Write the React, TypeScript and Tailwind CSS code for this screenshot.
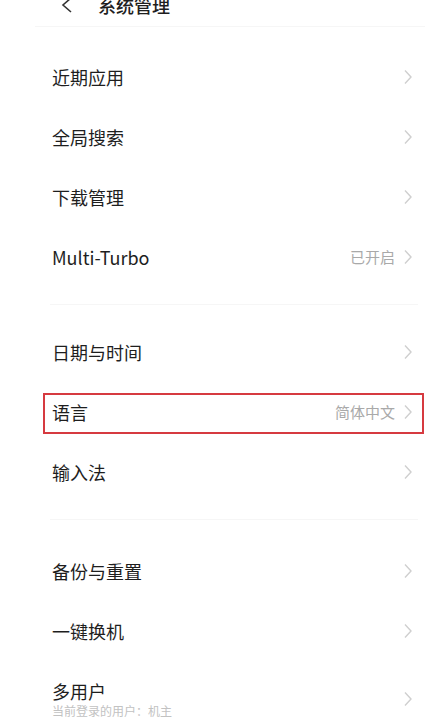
import React from "react";

const Chevron = () => (
  <svg width="10" height="16" viewBox="0 0 10 16" className="shrink-0">
    <polyline points="2,1.5 8,8 2,14.5" fill="none" stroke="#cfcfcf" strokeWidth="1.4" />
  </svg>
);

type RowProps = { title: string; value?: string; sub?: string; highlight?: boolean };

const Row = ({ title, value, sub, highlight }: RowProps) => (
  <div className="relative flex items-center pl-[52px] pr-[12px] h-[60px]">
    <div className="flex-1 flex flex-col">
      <span className="text-[18px] leading-[22px] text-[#1e1e1e]">{title}</span>
      {sub && <span className="text-[12px] leading-[16px] mt-[1px] text-[#c2c2c2]">{sub}</span>}
    </div>
    {value && <span className="text-[15px] text-[#a9a9a9] mr-[8px]">{value}</span>}
    <Chevron />
    {highlight && (
      <div className="absolute left-[43px] right-[1px] top-[11px] h-[41px] border-2 border-[#d63a40]" />
    )}
  </div>
);

const Divider = ({ bottom }: { bottom: string }) => (
  <div className={`pt-[17px] ${bottom}`}>
    <div className="ml-[50px] mr-[7px] h-px bg-[#f6f6f6]" />
  </div>
);

export default function App() {
  return (
    <div
      className="w-[425px] h-[723px] overflow-hidden bg-white"
      style={{ fontFamily: '"Noto Sans CJK SC", "Noto Sans", sans-serif' }}
    >
      <div className="h-[33px]">
        <div className="flex items-center h-[24px] -mt-[7px]">
          <svg width="14" height="16" viewBox="0 0 14 16" className="ml-[60px]">
            <polyline points="11,1 3,8 11,15" fill="none" stroke="#333" strokeWidth="1.6" />
          </svg>
          <span className="ml-[24px] text-[18px] font-medium text-[#1e1e1e]">系统管理</span>
        </div>
      </div>
      <div className="ml-[35px] h-px bg-[#f6f6f6]" />
      <div className="h-[20px]" />
      <Row title="近期应用" />
      <Row title="全局搜索" />
      <Row title="下载管理" />
      <Row title="Multi-Turbo" value="已开启" />
      <Divider bottom="pb-[17px]" />
      <Row title="日期与时间" />
      <Row title="语言" value="简体中文" highlight />
      <Row title="输入法" />
      <Divider bottom="pb-[21px]" />
      <Row title="备份与重置" />
      <Row title="一键换机" />
      <div className="h-[8px]" />
      <Row title="多用户" sub="当前登录的用户：机主" />
    </div>
  );
}
